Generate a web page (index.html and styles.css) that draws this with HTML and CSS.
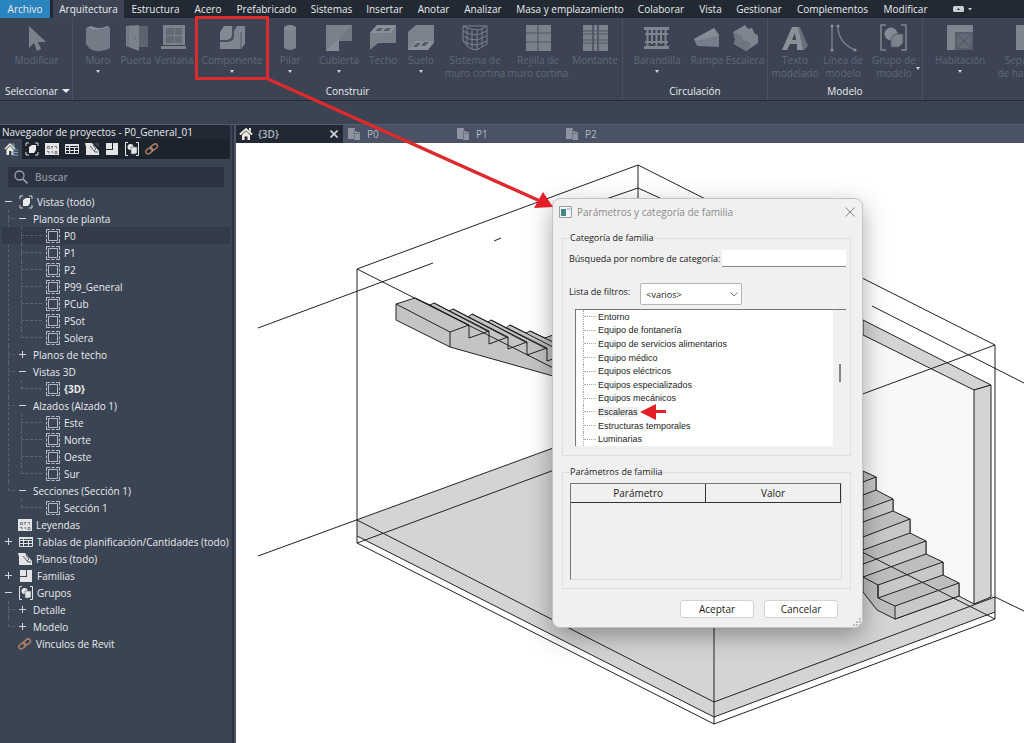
FILE: index.html
```html
<!DOCTYPE html>
<html lang="es">
<head>
<meta charset="utf-8">
<title>P0_General_01</title>
<link rel="stylesheet" href="styles.css">
</head>
<body>
<svg class="defs" aria-hidden="true">
  <symbol id="i-view" viewBox="0 0 14 14"><path d="M1 4V1h3M10 1h3v3M13 10v3h-3M4 13H1v-3" fill="none" stroke="#d5d8dc"/><path d="M4 5l3-2h4v5l-2 3H4z" fill="#e8eaec"/></symbol>
  <symbol id="i-frame" viewBox="0 0 14 14"><path d="M2.500 2.500h9v9h-9z" fill="none" stroke="#b4bac3"/><path d="M.5 4V.5H4M5.500.5h3M10 .5h3.500V4M13.500 5.500v3M13.500 10v3.500H10M8.500 13.500h-3M4 13.500H.5V10M.5 8.500v-3" fill="none" stroke="#b9bec6"/></symbol>
  <symbol id="i-legend" viewBox="0 0 14 14"><path d="M0 1h14v12H0z" fill="#e3e4e6"/><path d="M2.500 4.500h2v2h-2zM9.500 4.500h2v2M2 9.500h2v2M6.500 9.500h1v1.500M10 9.500h2v2h-2zM6 4.500h2M7 4v3" fill="none" stroke="#757b84"/></symbol>
  <symbol id="i-table" viewBox="0 0 14 14"><path d="M.5 2.500h13v9H.5zM.5 5.500h13M.5 8.500h13M4.500 2.500v9M9.500 5.500v6" fill="none" stroke="#dfe2e5"/><path d="M0 2h14v2H0z" fill="#dfe2e5"/></symbol>
  <symbol id="i-sheet" viewBox="0 0 14 14"><path d="M0 1h7l7 8v4H1V5z" fill="#e3e4e6"/><path d="M5 4l5 6h3M8 3l3 4-2 2" stroke="#59616d" fill="none"/><path d="M9 1h5v5z" fill="#3b4453"/></symbol>
  <symbol id="i-family" viewBox="0 0 14 14"><path d="M1 1h6v6H1zM8 1h5v12H1V8h7z" fill="#e3e4e6"/></symbol>
  <symbol id="i-group" viewBox="0 0 14 14"><path d="M3 .5H.5v13H3M11 .5h2.500v13H11" fill="none" stroke="#e3e4e6"/><circle cx="5.500" cy="5" r="3" fill="#e3e4e6"/><path d="M6 5h6v6l-2 1H6z" fill="#e3e4e6" stroke="#59616d" stroke-width=".6"/></symbol>
  <symbol id="i-link" viewBox="0 0 14 14"><g fill="none" stroke="#b98468" stroke-width="1.300" transform="rotate(-38 7 7)"><rect x="0" y="4.500" width="7.500" height="4.500" rx="2.200"/><rect x="6" y="4.500" width="7.500" height="4.500" rx="2.200"/></g></symbol>
  <symbol id="i-home" viewBox="0 0 14 14"><path d="M1 7.500L7 2l6 5.500" fill="none" stroke="#ece9dd" stroke-width="2"/><path d="M3 8l4-4 4 4v5H8.500V9.500h-3V13H3z" fill="#ece9dd"/><path d="M10 1h2v4l-2-2z" fill="#ece9dd"/></symbol>
  <symbol id="i-homes" viewBox="0 0 14 14"><path d="M1 7l5-5 5 5" fill="none" stroke="#ece9dd" stroke-width="1.500"/><path d="M2.500 7.500L6 4l3.500 3.500V13h-2V9H5v4H2.500z" fill="#ece9dd"/><path d="M8 2h2v3M8 8h6M8 10.500h6M8 13h6" fill="none" stroke="#7fa6c4"/></symbol>
  <symbol id="i-plan" viewBox="0 0 12 12"><path d="M0 0h7v3h2v1h3v8H6v-1H0z" fill="#8e939f"/><path d="M6.500 1v10M6 5.500h6" stroke="#656c7c" stroke-width=".8"/></symbol>
</svg>

<div class="app">
  <nav class="menu">
    <button class="file">Archivo</button>
    <button class="active">Arquitectura</button>
    <button>Estructura</button>
    <button>Acero</button>
    <button>Prefabricado</button>
    <button>Sistemas</button>
    <button>Insertar</button>
    <button>Anotar</button>
    <button>Analizar</button>
    <button>Masa y emplazamiento</button>
    <button>Colaborar</button>
    <button>Vista</button>
    <button>Gestionar</button>
    <button>Complementos</button>
    <button>Modificar</button>
    <button class="more" aria-label="Mostrar cinta"><svg width="22" height="8" viewBox="0 0 22 8"><rect x="1" y="1" width="11" height="6" rx="1.500" fill="#ccd0d5"/><path d="M5 5l1.500-2L8 5z" fill="#222933"/><path d="M16 3h4l-2 2.500z" fill="#ccd0d5"/></svg></button>
  </nav>

  <div class="ribbon">
    <section class="panel select">
      <div class="tools">
        <button class="tool"><svg viewBox="0 0 28 28"><path d="M6 2v22l5-5 3 8 4-2-3-7h8z" fill="#7b828c"/></svg><span>Modificar</span></button>
      </div>
      <h2>Seleccionar <i class="tri"></i></h2>
    </section>
    <section class="panel build">
      <div class="tools">
        <button class="tool"><svg viewBox="0 0 28 28"><path d="M2 4q10 5 24-1v21q-10 6-20 1l-4-5z" fill="#747b86"/><path d="M2 4l5-2q9 4 16 0l3 1q-12 6-24 1z" fill="#868c96"/></svg><span>Muro</span><i class="caret"></i></button>
        <button class="tool"><svg viewBox="0 0 28 28"><path d="M15 2h11v21H15z" fill="#5c6470"/><path d="M4 2l13-1v26L4 22z" fill="#7b828c"/><path d="M6 3v19M13 13v3" stroke="#656d79"/></svg><span>Puerta</span></button>
        <button class="tool"><svg viewBox="0 0 28 28"><path d="M3 1h22v20H3zM1 22h25v3H1z" fill="#7b828c"/><path d="M6 4h8v7H6zM15 4h7v7h-7zM6 12h8v7H6zM15 12h7v7h-7z" fill="#626a76"/></svg><span>Ventana</span></button>
        <button class="tool"><svg viewBox="0 0 28 28"><path d="M2 8l4-6h8v9q0 4-5 5H2z" fill="#848a94"/><path d="M16 7l3-5h8v18l-4 5H2v-7h8q6-1 6-6z" fill="#80868f"/><path d="M23 8v17M15 2v9q-1 6-7 6H2" stroke="#555d6a" fill="none"/></svg><span>Componente</span><i class="caret"></i></button>
        <button class="tool"><svg viewBox="0 0 28 28"><path d="M8 3q6-3 12 0v21q-6 4-12 0z" fill="#7c838d"/><ellipse cx="14" cy="4" rx="6" ry="3" fill="#858b95"/></svg><span>Pilar</span><i class="caret"></i></button>
        <button class="tool"><svg viewBox="0 0 28 28"><path d="M1 1h26v16H14v10H1z" fill="#7a818b"/><path d="M27 1v16H14V14z" fill="#727984"/><path d="M1 27l13-13v13z" fill="#858b95"/></svg><span>Cubierta</span><i class="caret"></i></button>
        <button class="tool"><svg viewBox="0 0 28 28"><path d="M1 9l7-8h19v18H9l-8 7z" fill="#79808a"/><path d="M1 9l7-8h19l-5 8z" fill="#89909a"/><path d="M6 7l4-3h4l-3 3zM14 7l4-3h4l-3 3z" fill="#535b68"/></svg><span>Techo</span></button>
        <button class="tool"><svg viewBox="0 0 28 28"><path d="M1 8l8-7h18v18l-6 7H1z" fill="#7c838d"/><path d="M1 26l8-9h18l-6 9z" fill="#8b919b"/><path d="M6 23l4-4h4l-4 4zM14 22l3-4h5l-4 4z" fill="#535b68"/></svg><span>Suelo</span><i class="caret"></i></button>
        <button class="tool"><svg viewBox="0 0 28 28"><path d="M2 2v15l4 5q4 4 10 4l10-6V2l-8 4q-8 0-16-4zM2 7q6 4 14 4l10-4M2 12q6 4 14 4l10-4M2 17q6 4 14 4l10-4M6 4v18M11 6v19M16 6v20M21 5v18M2 2h24" fill="none" stroke="#7b828c"/></svg><span>Sistema de<br>muro cortina</span></button>
        <button class="tool"><svg viewBox="0 0 28 28"><path d="M2 1h25v26H2z" fill="#7a818b"/><path d="M2 9h25M2 18h25M14 1v26" stroke="#515966" stroke-width="1.200"/></svg><span>Rejilla de<br>muro cortina</span></button>
        <button class="tool"><svg viewBox="0 0 28 28"><path d="M2 1h25v26H2z" fill="#7a818b"/><path d="M2 7h25M2 10h25M2 16h25M2 19h25" stroke="#515966" stroke-width="1.200"/><path d="M12 1v26M17 1v26" stroke="#515966" stroke-width="2"/></svg><span>Montante</span></button>
      </div>
      <h2>Construir</h2>
    </section>
    <section class="panel circ">
      <div class="tools">
        <button class="tool"><svg viewBox="0 0 28 28"><path d="M1 3h25v3H1zM1 22h25v3H1zM2 9h23v2H2zM2 17h23v2H2z" fill="#7e858f"/><path d="M4.500 6v16M9 6v14M13.500 6v16M18 6v14M22.500 6v16" stroke="#7e858f" stroke-width="2"/></svg><span>Barandilla</span><i class="caret"></i></button>
        <button class="tool"><svg viewBox="0 0 28 28"><path d="M1 15L21 4l5 7v12L4 22z" fill="#777e89"/><path d="M1 15L21 4l5 7-23 6z" fill="#868c96"/></svg><span>Rampa</span></button>
        <button class="tool"><svg viewBox="0 0 28 28"><path d="M2 8l12-7 3 4 4-1 3 6 3 1v8L15 27 3 20l1-5z" fill="#7e858f"/><path d="M2 8l9 4 1 4 7 2v4l-4 5-12-7 1-5z" fill="#6e7581"/></svg><span>Escalera</span></button>
      </div>
      <h2>Circulación</h2>
    </section>
    <section class="panel model">
      <div class="tools">
        <button class="tool"><svg viewBox="0 0 28 28"><path d="M12 3h7l8 19-4 4h-4z" fill="#687079"/><path fill-rule="evenodd" d="M11 3h6l5 23h-6v-6H9l-3 6H1zM14 9l-3 7h4z" fill="#8b9099"/></svg><span>Texto<br>modelado</span></button>
        <button class="tool"><svg viewBox="0 0 28 28"><path d="M3 2v24M9 2q0 17 17 24" fill="none" stroke="#7e858f" stroke-width="1.300"/><circle cx="3" cy="2" r="1.600" fill="#8b9099"/><circle cx="3" cy="26" r="1.600" fill="#8b9099"/><circle cx="9" cy="2" r="1.600" fill="#8b9099"/><circle cx="26" cy="26" r="1.600" fill="#8b9099"/></svg><span>Línea de<br>modelo</span></button>
        <button class="tool side"><svg viewBox="0 0 28 28"><path d="M6 1H1v25h5M21 1h5v25h-5" fill="none" stroke="#7e858f" stroke-width="1.500"/><circle cx="11" cy="10" r="6.500" fill="#858b95"/><path d="M11 14l4-4h8v9l-4 4h-8z" fill="#7d848e" stroke="#545c68"/></svg><span>Grupo de<br>modelo</span><i class="caret"></i></button>
      </div>
      <h2>Modelo</h2>
    </section>
    <section class="panel room">
      <div class="tools">
        <button class="tool"><svg viewBox="0 0 28 28"><path d="M1 1h26v25H1z" fill="#626a76"/><path d="M1 1h26v7H9v18H1z" fill="#7e858f"/><path d="M10 9h16v16H10zM10 9l16 16M26 9L10 25" fill="none" stroke="#4b5360"/></svg><span>Habitación</span><i class="caret"></i></button>
        <button class="tool"><svg viewBox="0 0 28 28"><path d="M1 1h26v25H1z" fill="#6a727d"/><path d="M1 1h26v7H9v18H1z" fill="#7e858f"/><path d="M12 10v15" stroke="#4b5360"/></svg><span>Separador<br>de habitación</span></button>
      </div>
    </section>
  </div>

  <div class="options"></div>

  <div class="work">
    <aside class="browser">
      <h1>Navegador de proyectos - P0_General_01</h1>
      <div class="filters">
        <button class="on" aria-label="Todo"><svg><use href="#i-homes"/></svg></button>
        <button aria-label="Vistas"><svg><use href="#i-view"/></svg></button>
        <button aria-label="Leyendas"><svg><use href="#i-legend"/></svg></button>
        <button aria-label="Tablas"><svg><use href="#i-table"/></svg></button>
        <button aria-label="Planos"><svg><use href="#i-sheet"/></svg></button>
        <button aria-label="Familias"><svg><use href="#i-family"/></svg></button>
        <button aria-label="Grupos"><svg><use href="#i-group"/></svg></button>
        <button aria-label="Vínculos"><svg><use href="#i-link"/></svg></button>
      </div>
      <label class="search">
        <svg width="14" height="14" viewBox="0 0 14 14"><circle cx="5.500" cy="5.500" r="4.500" fill="none" stroke="#9ba2ad" stroke-width="1.300"/><path d="M9 9l4.500 4.500" stroke="#9ba2ad" stroke-width="1.600"/></svg>
        <input type="text" placeholder="Buscar" aria-label="Buscar">
      </label>
      <ul class="tree">
        <li><div class="row"><button class="tg" aria-label="Contraer"></button><svg><use href="#i-view"/></svg><span>Vistas (todo)</span></div>
          <ul class="l2">
            <li><div class="row"><button class="tg" aria-label="Contraer"></button><span>Planos de planta</span></div>
              <ul class="l3">
                <li><div class="row sel"><svg><use href="#i-frame"/></svg><span>P0</span></div></li>
                <li><div class="row"><svg><use href="#i-frame"/></svg><span>P1</span></div></li>
                <li><div class="row"><svg><use href="#i-frame"/></svg><span>P2</span></div></li>
                <li><div class="row"><svg><use href="#i-frame"/></svg><span>P99_General</span></div></li>
                <li><div class="row"><svg><use href="#i-frame"/></svg><span>PCub</span></div></li>
                <li><div class="row"><svg><use href="#i-frame"/></svg><span>PSot</span></div></li>
                <li><div class="row"><svg><use href="#i-frame"/></svg><span>Solera</span></div></li>
              </ul></li>
            <li><div class="row"><button class="tg plus" aria-label="Expandir"></button><span>Planos de techo</span></div></li>
            <li><div class="row"><button class="tg" aria-label="Contraer"></button><span>Vistas 3D</span></div>
              <ul class="l3"><li><div class="row"><svg><use href="#i-frame"/></svg><b>{3D}</b></div></li></ul></li>
            <li><div class="row"><button class="tg" aria-label="Contraer"></button><span>Alzados (Alzado 1)</span></div>
              <ul class="l3">
                <li><div class="row"><svg><use href="#i-frame"/></svg><span>Este</span></div></li>
                <li><div class="row"><svg><use href="#i-frame"/></svg><span>Norte</span></div></li>
                <li><div class="row"><svg><use href="#i-frame"/></svg><span>Oeste</span></div></li>
                <li><div class="row"><svg><use href="#i-frame"/></svg><span>Sur</span></div></li>
              </ul></li>
            <li><div class="row"><button class="tg" aria-label="Contraer"></button><span>Secciones (Sección 1)</span></div>
              <ul class="l3"><li><div class="row"><svg><use href="#i-frame"/></svg><span>Sección 1</span></div></li></ul></li>
          </ul></li>
        <li><div class="row leaf"><svg><use href="#i-legend"/></svg><span>Leyendas</span></div></li>
        <li><div class="row"><button class="tg plus" aria-label="Expandir"></button><svg><use href="#i-table"/></svg><span>Tablas de planificación/Cantidades (todo)</span></div></li>
        <li><div class="row leaf"><svg><use href="#i-sheet"/></svg><span>Planos (todo)</span></div></li>
        <li><div class="row"><button class="tg plus" aria-label="Expandir"></button><svg><use href="#i-family"/></svg><span>Familias</span></div></li>
        <li><div class="row"><button class="tg" aria-label="Contraer"></button><svg><use href="#i-group"/></svg><span>Grupos</span></div>
          <ul class="l2">
            <li><div class="row"><button class="tg plus" aria-label="Expandir"></button><span>Detalle</span></div></li>
            <li><div class="row"><button class="tg plus" aria-label="Expandir"></button><span>Modelo</span></div></li>
          </ul></li>
        <li><div class="row leaf"><svg><use href="#i-link"/></svg><span>Vínculos de Revit</span></div></li>
      </ul>
    </aside>

    <main class="views">
      <div class="vtabs">
        <div class="vtab cur"><svg class="home"><use href="#i-home"/></svg><span>{3D}</span><button aria-label="Cerrar"><svg width="8" height="8" viewBox="0 0 8 8"><path d="M.5.5l7 7M7.500.5l-7 7" stroke="#d2d5da" stroke-width="1.600"/></svg></button></div>
        <div class="vtab"><svg><use href="#i-plan"/></svg><span>P0</span></div>
        <div class="vtab"><svg><use href="#i-plan"/></svg><span>P1</span></div>
        <div class="vtab"><svg><use href="#i-plan"/></svg><span>P2</span></div>
      </div>
      <div class="canvas">
        <svg class="scene" viewBox="236 143 788 600" preserveAspectRatio="xMinYMin slice">
          <g stroke="#222" stroke-width="1" fill="none" stroke-linejoin="round">
            <path d="M357 520L638 417 995 597V612L714 717 357 536z" fill="#d4d4d4" stroke="none"/>
            <path d="M638 225L974 390V604L638 435z" fill="#f8f8f8" stroke="none"/>
            <path d="M863 320L991 385 974 390 863 335z" fill="#d4d4d4"/>
            <path d="M974 390L991 385V597L974 604z" fill="#d4d4d4"/>
            <path d="M863 471L876 477V490L893 499V511L910 519V533L926 541V554L943 562V575L959 583V596L895 619 877 610 863 592z" fill="#bebebe"/>
            <path d="M895 606L959 583V596L895 619zM878 585L943 562V575L878 598zM863 564L926 541V554L863 577zM863 537L910 519V533L863 550zM863 510L893 499V511L863 522zM863 482L876 477V490L863 495z" fill="#c8c8c8"/>
            <path d="M895 606L878 598V585L863 577M959 596L974 604"/>
            <path d="M415 298L430 305 434 303 449 311 453 309 468 317 472 314 488 322 491 320 506 328 510 325 526 333 530 331 545 338 553 335V376L450 347 396 320V304z" fill="#c4c4c4"/>
            <path d="M396 304L450 332 469 325M450 332V347"/>
            <path d="M415 298L469 325V338L489 331V344L508 337V349L527 342V355L547 348V361L553 359"/>
            <path d="M434 303L489 331M453 309L508 337M472 314L527 342M491 320L547 348M510 325L553 347M530 331L553 342M430 305L470 326M449 311L489 332M468 317L508 338M488 322L527 343M506 328L547 349"/>
            <path d="M357 269L638 165 995 345V619L714 724 357 543zM357 269L714 449 995 345M714 449V724M638 165V439M357 543L638 439 995 619"/>
            <path d="M606 199L638 188 662 199M258 328L433 263M494 241L501 238M872 306L1024 383M995 597L1024 611M258 556L638 417M357 520L714 702 995 597M357 536L714 717 995 612"/>
          </g>
        </svg>
      </div>
    </main>
  </div>

  <section class="dialog" role="dialog" aria-labelledby="dlg-title">
    <header>
      <svg width="13" height="12" viewBox="0 0 13 12"><path d="M.5.500h12v11H.5z" fill="#f4f6f6" stroke="#9aa0a3"/><path d="M2 3h5v7H2z" fill="#3f8582"/><path d="M8 2h4v2H8z" fill="#b6d0e6"/></svg>
      <h2 id="dlg-title">Parámetros y categoría de familia</h2>
      <button class="close" aria-label="Cerrar"><svg width="10" height="10" viewBox="0 0 10 10"><path d="M.5.5l9 9M9.500.5l-9 9" stroke="#858585"/></svg></button>
    </header>
    <fieldset class="category">
      <legend>Categoría de familia</legend>
      <div class="field"><label for="q">Búsqueda por nombre de categoría:</label><input id="q" type="text"></div>
      <div class="field filter"><label for="f">Lista de filtros:</label><div class="combo"><select id="f"><option>&lt;varios&gt;</option></select><svg width="8" height="5" viewBox="0 0 8 5"><path d="M.5.500L4 4 7.500.5" fill="none" stroke="#777"/></svg></div></div>
      <div class="list">
        <ul>
          <li><span>Entorno</span></li>
          <li><span>Equipo de fontanería</span></li>
          <li><span>Equipo de servicios alimentarios</span></li>
          <li><span>Equipo médico</span></li>
          <li><span>Equipos eléctricos</span></li>
          <li><span>Equipos especializados</span></li>
          <li><span>Equipos mecánicos</span></li>
          <li><span class="picked">Escaleras</span><svg width="26" height="16" viewBox="0 0 26 16"><path d="M0 8L16 0v6h10v3H16v7z" fill="#e3202a"/></svg></li>
          <li><span>Estructuras temporales</span></li>
          <li><span>Luminarias</span></li>
        </ul>
        <div class="scroll"><i></i></div>
      </div>
    </fieldset>
    <fieldset class="params">
      <legend>Parámetros de familia</legend>
      <div class="grid">
        <table><thead><tr><th>Parámetro</th><th>Valor</th></tr></thead></table>
      </div>
    </fieldset>
    <footer><button>Aceptar</button><button>Cancelar</button></footer>
    <svg class="grip" width="8" height="8" viewBox="0 0 8 8"><path d="M6 0h2v2H6zM6 3h2v2H6zM3 3h2v2H3zM6 6h2v2H6zM3 6h2v2H3zM0 6h2v2H0z" fill="#bcbcbc"/></svg>
  </section>

  <svg class="callout" width="560" height="212" viewBox="0 0 560 212"><path d="M196.500 17.500h71v61h-71z" fill="none" stroke="#dc2a2e" stroke-width="3"/><path d="M268 79L540 201" stroke="#dc2a2e" stroke-width="3.500"/><path d="M553 207L543 192 534 208z" fill="#e3202a"/></svg>
</div>
</body>
</html>
```
FILE: styles.css
```css
* { box-sizing: border-box; }
body { margin: 0; background: #3b4453; font-family: "Open Sans", "Noto Sans", sans-serif; font-size: 10px; color: #e9ebee; }
button, input, select { font: inherit; color: inherit; border: 0; padding: 0; margin: 0; background: none; }
h1, h2 { margin: 0; font-size: inherit; font-weight: 400; }
ul { list-style: none; margin: 0; padding: 0; }
.defs { display: none; }
.app { position: relative; min-height: 100vh; display: flex; flex-direction: column; overflow: hidden; }

/* Menu */
.menu { display: grid; height: 18px; background: #222933; grid-template-columns: 50px 77px 57px 48px 69px 61px 45px 53px 46px 128px 54px 45px 52px 95px 51px 64px; }
.menu button { white-space: nowrap; line-height: 18px; }
.menu .file { background: #2a84bd; }
.menu .active { background: #3d4554; margin: 0 3px; }
.menu .more { display: flex; align-items: center; justify-content: center; }

/* Ribbon */
.ribbon { display: flex; height: 83px; border-bottom: 1px solid #232a35; background: #3c4453; overflow: hidden; }
.panel { flex: none; display: flex; flex-direction: column; justify-content: space-between; border-right: 1px solid #4a5261; }
.panel h2 { text-align: center; line-height: 18px; }
.tools { display: grid; padding-left: 1px; }
.tool { display: flex; flex-direction: column; align-items: center; justify-content: flex-start; padding-top: 6px; color: #5f6876; line-height: 13px; white-space: nowrap; min-width: 0; }
.tool > svg { width: 28px; height: 28px; flex: none; margin-bottom: 2px; }
.tool span { text-align: center; }
.caret { width: 0; height: 0; border: 2px solid transparent; border-top: 3px solid #d0d4d9; border-bottom: 0; margin-top: 3px; }
.select { width: 73px; }
.select h2 { display: flex; align-items: center; gap: 4px; padding-left: 5px; }
.tri { border: 4px solid transparent; border-top-color: #e9ebee; border-bottom: 0; }
.build { width: 550px; }
.build .tools { grid-template-columns: 38px 38px 38px 78px 38px 60px 28px 48px 60px 66px 48px; padding-left: 6px; }
.circ { width: 145px; }
.circ .tools { grid-template-columns: 66px 34px 42px; }
.model { width: 155px; }
.model .tools { grid-template-columns: 52px 44px 58px; }
.side { position: relative; }
.side .caret { position: absolute; right: 3px; top: 46px; }
.room { width: 160px; border: 0; }
.room .tools { grid-template-columns: 72px 66px; }

.options { height: 24px; border-bottom: 1px solid #545c6e; }
.work { flex: 1; display: flex; min-height: 0; }

/* Project browser */
.browser { flex: none; width: 236px; border-right: 2px solid #4b5466; padding-right: 4px; box-shadow: inset -2px 0 #2b3340; }
.browser h1 { background: #222934; line-height: 14px; padding-left: 2px; white-space: nowrap; }
.filters { display: flex; background: #1d232c; height: 20px; }
.filters button { width: 20px; display: grid; place-items: center; }
.filters .on { width: 22px; background: #3b4453; }
.filters svg, .row svg { width: 14px; height: 14px; flex: none; }
.search { display: flex; align-items: center; gap: 7px; height: 20px; margin: 8px 6px 6px 8px; padding-left: 6px; background: #2d3441; }
.search input { flex: 1; min-width: 0; outline: 0; }
.search input::placeholder { color: #8a919c; opacity: 1; font-weight: 600; }
.tree li { position: relative; }
.row { display: flex; align-items: center; height: 17px; padding-left: 2px; gap: 4px; white-space: nowrap; }
.row.leaf { padding-left: 18px; }
.tg { position: relative; width: 12px; height: 12px; margin-right: 1px; flex: none; }
.tg::before { content: ""; position: absolute; left: 3px; top: 5px; width: 7px; height: 1px; background: #d4d8dd; }
.plus::after { content: ""; position: absolute; left: 6px; top: 2px; width: 1px; height: 7px; background: #d4d8dd; }
.l2 { margin-left: 8px; }
.l2 .row { padding-left: 8px; }
.l3 { margin-left: 13px; }
.l3 .row { padding-left: 25px; }
.l3 .row.sel { margin-left: -19px; padding-left: 44px; background: #333b48; }
.l2 li::before { content: ""; position: absolute; left: 0; top: 0; bottom: 0; border-left: 1px dashed #59626f; }
.l2 li:last-child::before { bottom: auto; height: 9px; }
.l2 li::after { content: ""; position: absolute; left: 0; top: 8px; width: 7px; border-top: 1px dashed #59626f; }
.l3 li::after { width: 21px; }

/* Views */
.views { flex: 1; min-width: 0; display: flex; flex-direction: column; }
.vtabs { display: flex; height: 18px; background: #4a5265; color: #b4bac5; }
.vtab { width: 109px; display: flex; align-items: center; gap: 7px; padding-left: 5px; }
.vtab svg { width: 12px; height: 12px; }
.vtab.cur { width: 107px; background: #222934; padding: 0 5px 0 3px; gap: 5px; font-weight: 600; }
.vtab .home { width: 14px; height: 14px; }
.vtab button { margin-left: auto; display: flex; }
.vtab button svg { width: 8px; height: 8px; }
.canvas { flex: 1; background: #fff; min-height: 0; position: relative; }
.scene { display: block; position: absolute; inset: 0; width: 100%; height: 100%; }

/* Dialog */
.dialog { position: absolute; left: 552px; top: 198px; width: 311px; border: 1px solid #c4c4c4; border-radius: 8px; background: #f0f0f0; color: #1b1b1b; padding: 0 11px 9px 9px; box-shadow: 0 8px 24px rgba(0,0,0,.34); }
.dialog header { display: flex; align-items: center; gap: 5px; height: 26px; margin: 0 -4px 7px -3px; color: #8b8b8b; }
.dialog header h2 { flex: 1; }
.close { display: flex; }
fieldset { margin: 0; min-width: 0; border: 1px solid #dfdfdf; }
legend { padding: 0 1px; line-height: 12px; font-size: 9px; }
.category { padding: 6px 4px 9px 6px; font-size: 9px; }
.field { display: flex; align-items: center; justify-content: space-between; }
.field label { white-space: nowrap; }
.field input { width: 124px; height: 17px; background: #fff; border-bottom: 1px solid #888; }
.filter { justify-content: flex-start; gap: 10px; margin: 16px 0 4px; }
.filter label { padding-bottom: 5px; }
.combo { position: relative; width: 102px; height: 22px; }
.combo select { appearance: none; width: 100%; height: 100%; background: #fff; border: 1px solid #b5b5b5; border-radius: 2px; padding-left: 5px; }
.combo svg { position: absolute; right: 4px; top: 9px; pointer-events: none; }
.list { display: flex; height: 137px; margin-left: 6px; border-left: 1px solid #777; border-top: 1px solid #777; font-family: "Liberation Sans", Arial, sans-serif; }
.list ul { flex: 1; display: flex; flex-direction: column; background: #fff; padding-left: 7px; }
.list li { flex: 1; display: flex; align-items: center; gap: 2px; border-left: 1px dotted #aaa; min-height: 0; white-space: nowrap; }
.list li::before { content: ""; width: 12px; border-top: 1px dotted #aaa; }
.picked { background: #efeff1; }
.scroll { width: 13px; display: flex; justify-content: center; padding-top: 54px; }
.scroll i { width: 2px; height: 18px; background: #858585; }
.params { margin-top: 10px; padding: 5px 8px 8px 7px; }
.params legend, .category legend { margin-left: -1px; }
.category legend { margin-left: 0; }
.grid { height: 97px; border: 1px solid; border-color: #777 #dcdcdc #dcdcdc #777; }
.grid table { width: 100%; border-collapse: collapse; table-layout: fixed; }
.grid th { font-weight: 400; height: 18px; padding: 0; border: 1px solid #333; border-top: 0; border-left: 0; }
.dialog footer { display: flex; justify-content: flex-end; gap: 10px; padding: 11px 13px 0 0; }
.dialog footer button { width: 74px; height: 18px; background: #fff; border: 1px solid #d2d2d2; border-radius: 3px; }
.grip { position: absolute; right: 1px; bottom: 1px; }

.callout { position: absolute; left: 0; top: 0; pointer-events: none; }
```
